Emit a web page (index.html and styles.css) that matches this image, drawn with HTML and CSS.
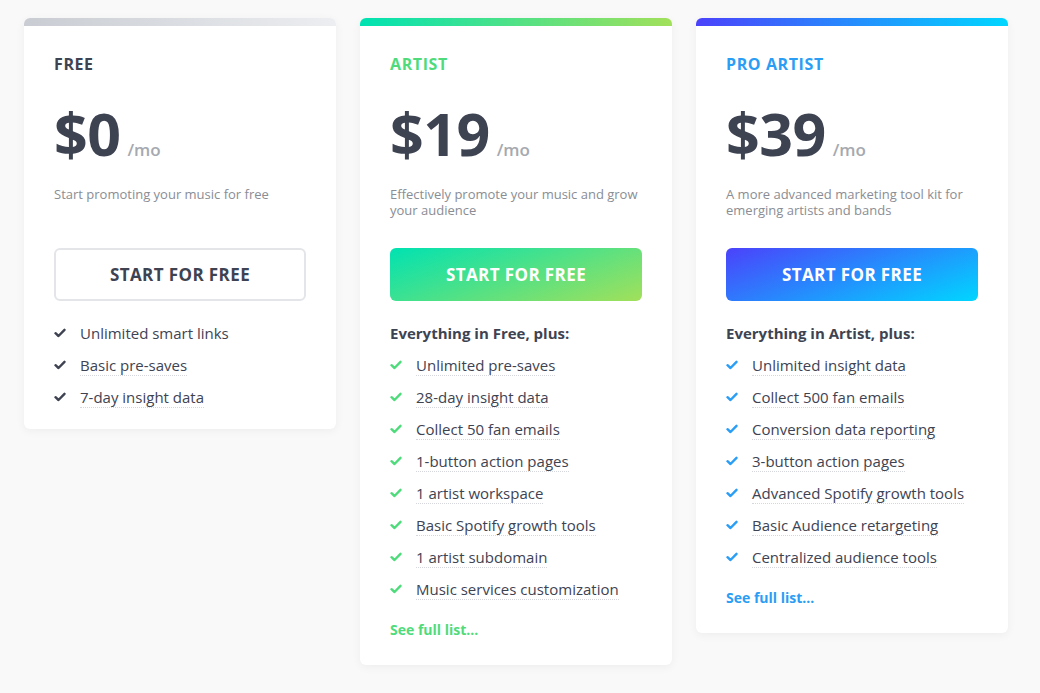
FILE: index.html
```html
<!DOCTYPE html>
<html>
<head>
<meta charset="utf-8">
<link rel="stylesheet" href="styles.css">
</head>
<body>
<div class="plans">
  <div class="card card-free">
    <div class="bar"></div>
    <div class="body">
      <div class="name">FREE</div>
      <div class="price"><span class="amount">$0</span><span class="per">/mo</span></div>
      <p class="desc">Start promoting your music for free</p>
      <a class="btn">START FOR FREE</a>
      <ul class="features">
        <li><svg class="check" viewBox="0 0 12 10"><path d="M1.5 5.2 L4.5 8 L10.5 1.8"/></svg><span class="plain">Unlimited smart links</span></li>
        <li><svg class="check" viewBox="0 0 12 10"><path d="M1.5 5.2 L4.5 8 L10.5 1.8"/></svg><span>Basic pre-saves</span></li>
        <li><svg class="check" viewBox="0 0 12 10"><path d="M1.5 5.2 L4.5 8 L10.5 1.8"/></svg><span>7-day insight data</span></li>
      </ul>
    </div>
  </div>

  <div class="card card-artist">
    <div class="bar"></div>
    <div class="body">
      <div class="name">ARTIST</div>
      <div class="price"><span class="amount">$19</span><span class="per">/mo</span></div>
      <p class="desc">Effectively promote your music and grow your audience</p>
      <a class="btn">START FOR FREE</a>
      <ul class="features">
        <li class="head">Everything in Free, plus:</li>
        <li><svg class="check" viewBox="0 0 12 10"><path d="M1.5 5.2 L4.5 8 L10.5 1.8"/></svg><span>Unlimited pre-saves</span></li>
        <li><svg class="check" viewBox="0 0 12 10"><path d="M1.5 5.2 L4.5 8 L10.5 1.8"/></svg><span>28-day insight data</span></li>
        <li><svg class="check" viewBox="0 0 12 10"><path d="M1.5 5.2 L4.5 8 L10.5 1.8"/></svg><span>Collect 50 fan emails</span></li>
        <li><svg class="check" viewBox="0 0 12 10"><path d="M1.5 5.2 L4.5 8 L10.5 1.8"/></svg><span>1-button action pages</span></li>
        <li><svg class="check" viewBox="0 0 12 10"><path d="M1.5 5.2 L4.5 8 L10.5 1.8"/></svg><span>1 artist workspace</span></li>
        <li><svg class="check" viewBox="0 0 12 10"><path d="M1.5 5.2 L4.5 8 L10.5 1.8"/></svg><span>Basic Spotify growth tools</span></li>
        <li><svg class="check" viewBox="0 0 12 10"><path d="M1.5 5.2 L4.5 8 L10.5 1.8"/></svg><span>1 artist subdomain</span></li>
        <li><svg class="check" viewBox="0 0 12 10"><path d="M1.5 5.2 L4.5 8 L10.5 1.8"/></svg><span>Music services customization</span></li>
      </ul>
      <a class="more">See full list...</a>
    </div>
  </div>

  <div class="card card-pro">
    <div class="bar"></div>
    <div class="body">
      <div class="name">PRO ARTIST</div>
      <div class="price"><span class="amount">$39</span><span class="per">/mo</span></div>
      <p class="desc">A more advanced marketing tool kit for emerging artists and bands</p>
      <a class="btn">START FOR FREE</a>
      <ul class="features">
        <li class="head">Everything in Artist, plus:</li>
        <li><svg class="check" viewBox="0 0 12 10"><path d="M1.5 5.2 L4.5 8 L10.5 1.8"/></svg><span>Unlimited insight data</span></li>
        <li><svg class="check" viewBox="0 0 12 10"><path d="M1.5 5.2 L4.5 8 L10.5 1.8"/></svg><span>Collect 500 fan emails</span></li>
        <li><svg class="check" viewBox="0 0 12 10"><path d="M1.5 5.2 L4.5 8 L10.5 1.8"/></svg><span>Conversion data reporting</span></li>
        <li><svg class="check" viewBox="0 0 12 10"><path d="M1.5 5.2 L4.5 8 L10.5 1.8"/></svg><span>3-button action pages</span></li>
        <li><svg class="check" viewBox="0 0 12 10"><path d="M1.5 5.2 L4.5 8 L10.5 1.8"/></svg><span>Advanced Spotify growth tools</span></li>
        <li><svg class="check" viewBox="0 0 12 10"><path d="M1.5 5.2 L4.5 8 L10.5 1.8"/></svg><span>Basic Audience retargeting</span></li>
        <li><svg class="check" viewBox="0 0 12 10"><path d="M1.5 5.2 L4.5 8 L10.5 1.8"/></svg><span>Centralized audience tools</span></li>
      </ul>
      <a class="more">See full list...</a>
    </div>
  </div>
</div>
</body>
</html>
```

FILE: styles.css
```css
* { box-sizing: border-box; }
html, body { margin: 0; padding: 0; }
body {
  background: #f9f9f9;
  font-family: "Open Sans", "Liberation Sans", sans-serif;
  color: #3e4352;
  width: 1040px;
  height: 693px;
  overflow: hidden;
}
.plans {
  display: flex;
  align-items: flex-start;
  gap: 24px;
  padding: 18px 24px;
}
.card {
  width: 312px;
  background: #fff;
  border-radius: 6px;
  box-shadow: 0 2px 10px rgba(0, 0, 0, 0.05);
  overflow: hidden;
}
.bar { height: 8px; }
.card-free .bar { background: linear-gradient(90deg, #c9ccd2, #eceef1); }
.card-artist .bar { background: linear-gradient(90deg, #00e2b2, #a2e05a); }
.card-pro .bar { background: linear-gradient(90deg, #4b42fb, #00d6ff); }

.body {
  display: flex;
  flex-direction: column;
  align-items: flex-start;
  padding: 28px 30px 16px;
}
.name {
  font-size: 16px;
  font-weight: 700;
  line-height: 20px;
  letter-spacing: 0.6px;
}
.card-free .name { color: #3e4352; }
.card-artist .name { color: #4fdb7b; }
.card-pro .name { color: #2a9df4; }

.price {
  display: flex;
  align-items: baseline;
  margin-top: 31px;
  height: 56px;
}
.amount {
  font-size: 59px;
  font-weight: 700;
  line-height: 56px;
  letter-spacing: -0.5px;
  color: #3e4352;
}
.per {
  font-size: 17px;
  font-weight: 600;
  color: #a6a9b0;
  margin-left: 7px;
}
.desc {
  margin: 25px 0 0;
  font-size: 13px;
  line-height: 16px;
  color: #8a8d94;
  min-height: 32px;
}
.btn {
  display: flex;
  align-items: center;
  justify-content: center;
  width: 252px;
  height: 53px;
  margin-top: 30px;
  border-radius: 6px;
  font-size: 17px;
  font-weight: 700;
  letter-spacing: 0.4px;
  color: #fff;
}
.card-free .btn {
  border: 2px solid #e3e5e9;
  color: #3e4352;
}
.card-artist .btn { background: linear-gradient(160deg, #00e2b2 0%, #a2e05a 100%); }
.card-pro .btn { background: linear-gradient(160deg, #4b42fb 0%, #00d6ff 100%); }

.features {
  list-style: none;
  margin: 16px 0 0;
  padding: 0;
  width: 100%;
}
.features li {
  display: flex;
  align-items: center;
  height: 32px;
  font-size: 15px;
}
.features li.head { font-weight: 700; }
.check {
  width: 12px;
  height: 10px;
  margin-right: 14px;
  flex: none;
  fill: none;
  stroke-width: 2.4;
  stroke-linecap: round;
  stroke-linejoin: round;
}
.card-free .check { stroke: #3e4352; }
.card-artist .check { stroke: #4fdb7b; }
.card-pro .check { stroke: #2a9df4; }
.features span {
  line-height: 20px;
  border-bottom: 1px dotted #d5d7dc;
}
.features span.plain { border-bottom-color: transparent; }

.more {
  margin: 9px 0 3px;
  line-height: 32px;
  font-size: 14px;
  font-weight: 700;
}
.card-artist .more { color: #4fdb7b; }
.card-pro .more { color: #2a9df4; }
```
